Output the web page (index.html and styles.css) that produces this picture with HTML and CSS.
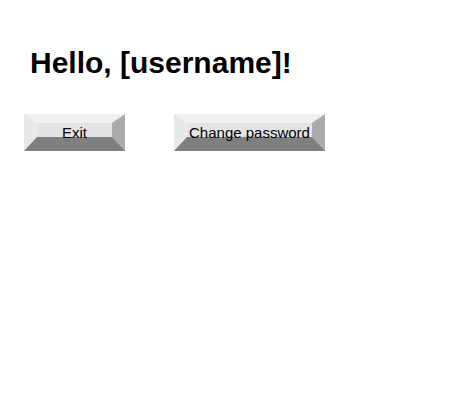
FILE: index.html
```html
<!DOCTYPE html>
<html>
<head>
<meta charset="utf-8">
<link rel="stylesheet" href="styles.css">
</head>
<body>
<div class="page">
  <h1 class="greeting">Hello, [username]!</h1>
  <div class="actions">
    <button class="bevel-btn exit">Exit</button>
    <button class="bevel-btn change">Change password</button>
  </div>
</div>
</body>
</html>
```
FILE: styles.css
```css
html, body {
  margin: 0;
  padding: 0;
  background: #ffffff;
}
body {
  font-family: "Liberation Sans", Arial, sans-serif;
  color: #000;
}
.page {
  padding: 46px 24px 0 24px;
}
.greeting {
  margin: 0 0 0 6px;
  font-size: 30px;
  font-weight: bold;
  line-height: 34px;
}
.actions {
  display: flex;
  gap: 49px;
  margin-top: 34px;
}
.bevel-btn {
  box-sizing: border-box;
  height: 37px;
  padding: 1px 0 0 0;
  margin: 0;
  font-family: "Liberation Sans", Arial, sans-serif;
  font-size: 15px;
  color: #000;
  background: #e4e4e4;
  border-style: solid;
  border-width: 9px 13px 14px 13px;
  border-top-color: #f1f1f1;
  border-left-color: #e9e9e9;
  border-right-color: #aaaaaa;
  border-bottom-color: #7f7f7f;
  line-height: 17px;
  overflow: visible;
  white-space: nowrap;
}
.exit { width: 101px; }
.change { width: 151px; }
```
